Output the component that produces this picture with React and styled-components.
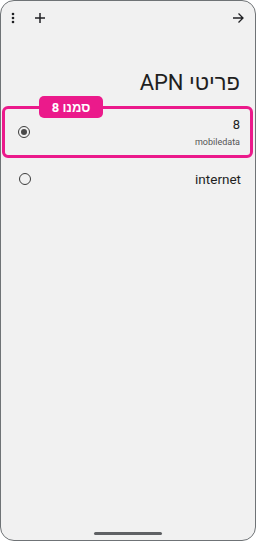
import React from "react";
import styled, { createGlobalStyle } from "styled-components";

const Global = createGlobalStyle`
  html, body { margin: 0; padding: 0; background: #ffffff; }
  body { font-family: Roboto, "Noto Sans", "Liberation Sans", sans-serif; }
  * { box-sizing: border-box; }
`;

const Frame = styled.div`
  width: 256px;
  height: 541px;
  border: 1px solid #6f7376;
  border-radius: 14px;
  background: #f1f1f1;
  display: flex;
  flex-direction: column;
  overflow: hidden;
`;

const TopBar = styled.div`
  height: 33px;
  display: flex;
  align-items: center;
  padding: 0 10px 0 6px;
  gap: 14px;
`;

const IconBtn = styled.div`
  width: ${(p) => p.$w || 14}px;
  height: 14px;
  display: flex;
  align-items: center;
  justify-content: center;
  color: #202124;
  margin-left: ${(p) => (p.$push ? "auto" : "0")};
`;

const Title = styled.h1`
  margin: 35px 15px 0 0;
  font-size: 22px;
  line-height: 28px;
  font-weight: 400;
  color: #1f1f1f;
  text-align: right;
`;

const List = styled.div`
  margin-top: 9px;
  display: flex;
  flex-direction: column;
`;

const Highlight = styled.div`
  position: relative;
  margin: 0 2px 0 1px;
  border: 3px solid #eb1a8b;
  border-radius: 6px;
`;

const Badge = styled.div`
  position: absolute;
  top: -13px;
  left: 34px;
  width: 64px;
  height: 22px;
  border-radius: 5px;
  background: #eb1a8b;
  color: #ffffff;
  font-weight: 700;
  font-size: 13px;
  display: flex;
  align-items: center;
  justify-content: center;
`;

const Row = styled.div`
  height: ${(p) => p.$h}px;
  display: flex;
  align-items: center;
  padding: 0 ${(p) => p.$pr}px 0 ${(p) => p.$pl}px;
`;

const Radio = styled.div`
  width: 12px;
  height: 12px;
  border-radius: 50%;
  border: 1.5px solid #3c3c3c;
  display: flex;
  align-items: center;
  justify-content: center;
  flex: none;
  &::after {
    content: "";
    display: ${(p) => (p.$on ? "block" : "none")};
    width: 6px;
    height: 6px;
    border-radius: 50%;
    background: #4a4a4a;
  }
`;

const Texts = styled.div`
  margin-left: auto;
  display: flex;
  flex-direction: column;
  align-items: flex-end;
  gap: 3px;
`;

const Name = styled.div`
  font-size: ${(p) => p.$size || 13}px;
  line-height: 16px;
  color: #1f1f1f;
`;

const Sub = styled.div`
  font-size: 9px;
  line-height: 12px;
  color: #555555;
`;

const HomeBar = styled.div`
  margin-top: auto;
  margin-bottom: 5px;
  align-self: center;
  width: 68px;
  height: 3px;
  border-radius: 2px;
  background: #5f6164;
`;

export default function App() {
  return (
    <>
      <Global />
      <Frame>
        <TopBar>
          <IconBtn $w={12}>
            <svg width="12" height="14" viewBox="0 0 12 14">
              <circle cx="6" cy="3" r="1.3" fill="#202124" />
              <circle cx="6" cy="7" r="1.3" fill="#202124" />
              <circle cx="6" cy="11" r="1.3" fill="#202124" />
            </svg>
          </IconBtn>
          <IconBtn>
            <svg width="14" height="14" viewBox="0 0 14 14">
              <path d="M7 2v10M2 7h10" stroke="#202124" strokeWidth="1.5" fill="none" />
            </svg>
          </IconBtn>
          <IconBtn $push>
            <svg width="14" height="14" viewBox="0 0 14 14">
              <path d="M2 7h10M7.5 2.5L12 7l-4.5 4.5" stroke="#202124" strokeWidth="1.3" fill="none" />
            </svg>
          </IconBtn>
        </TopBar>
        <Title dir="rtl">פריטי APN</Title>
        <List>
          <Highlight>
            <Badge dir="rtl">סמנו 8</Badge>
            <Row $h={46} $pl={13} $pr={10}>
              <Radio $on />
              <Texts>
                <Name>8</Name>
                <Sub>mobiledata</Sub>
              </Texts>
            </Row>
          </Highlight>
          <Row $h={42} $pl={18} $pr={14}>
            <Radio />
            <Texts>
              <Name $size={13.5}>internet</Name>
            </Texts>
          </Row>
        </List>
        <HomeBar />
      </Frame>
    </>
  );
}
